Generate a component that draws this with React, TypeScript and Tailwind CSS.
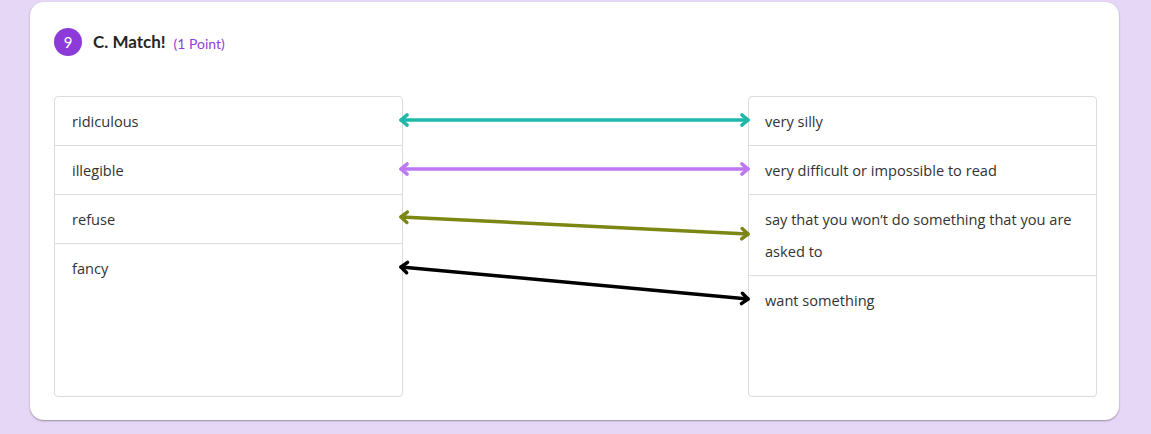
import React from "react";

const leftItems = ["ridiculous", "illegible", "refuse", "fancy"];
const rightItems = [
  "very silly",
  "very difficult or impossible to read",
  "say that you won\u2019t do something that you are asked to",
  "want something",
];

// y positions are relative to the top of the boxes
const links = [
  { color: "#1eb8a9", y1: 24, y2: 24 },
  { color: "#bf78f4", y1: 73, y2: 73 },
  { color: "#7b8613", y1: 121, y2: 138 },
  { color: "#000000", y1: 171, y2: 203 },
];

function Arrow({ x1, y1, x2, y2, color }: { x1: number; y1: number; x2: number; y2: number; color: string }) {
  const a = Math.atan2(y2 - y1, x2 - x1);
  const len = 8;
  const spread = 0.7;
  const head = (x: number, y: number, ang: number) => {
    const p1 = [x - len * Math.cos(ang - spread), y - len * Math.sin(ang - spread)];
    const p2 = [x - len * Math.cos(ang + spread), y - len * Math.sin(ang + spread)];
    return `M${p1[0]} ${p1[1]} L${x} ${y} L${p2[0]} ${p2[1]}`;
  };
  return (
    <g stroke={color} strokeWidth={3.5} fill="none" strokeLinecap="round" strokeLinejoin="round">
      <line x1={x1} y1={y1} x2={x2} y2={y2} />
      <path d={head(x2, y2, a)} />
      <path d={head(x1, y1, a + Math.PI)} />
    </g>
  );
}

export default function App() {
  return (
    <div className="min-h-screen bg-[#e7d7f6] pt-[2px] pl-[30px] pr-[32px]" style={{ fontFamily: '"Open Sans", "Noto Sans", sans-serif' }}>
      <div className="bg-white rounded-[14px] shadow-[0_1px_2px_rgba(0,0,0,0.35)] pl-[24px] pr-[22px] pt-[26px] pb-[23px]">
        <div className="flex items-center h-[28px]" style={{ fontFamily: 'Lato, sans-serif' }}>
          <div className="w-[28px] h-[28px] rounded-full bg-[#8d3bd8] text-white flex items-center justify-center text-[15px]">
            9
          </div>
          <div className="ml-[11px] text-[17px] font-bold text-[#262626]">
            C. Match!
          </div>
          <div className="ml-[8px] text-[14px] text-[#8f3fdc] mt-[2px]">
            (1 Point)
          </div>
        </div>

        <div className="flex mt-[40px] h-[301px]">
          <div className="w-[349px] border border-[#dcdcdc] rounded-[4px]">
            {leftItems.map((t) => (
              <div key={t} className="border-b border-[#dcdcdc] last:border-b-0 px-[17px] py-[8px] leading-[32px] text-[14.6px] text-[#333]">
                {t}
              </div>
            ))}
          </div>
          <div className="flex-1 relative">
            <svg className="absolute inset-0 overflow-visible" width="100%" height="100%">
              {links.map((l, i) => (
                <Arrow key={i} x1={-2} y1={l.y1} x2={345} y2={l.y2} color={l.color} />
              ))}
            </svg>
          </div>
          <div className="w-[349px] border border-[#dcdcdc] rounded-[4px]">
            {rightItems.map((t) => (
              <div key={t} className="border-b border-[#dcdcdc] last:border-b-0 px-[16px] py-[8px] leading-[32px] text-[14.6px] text-[#333]">
                {t}
              </div>
            ))}
          </div>
        </div>
      </div>
    </div>
  );
}
